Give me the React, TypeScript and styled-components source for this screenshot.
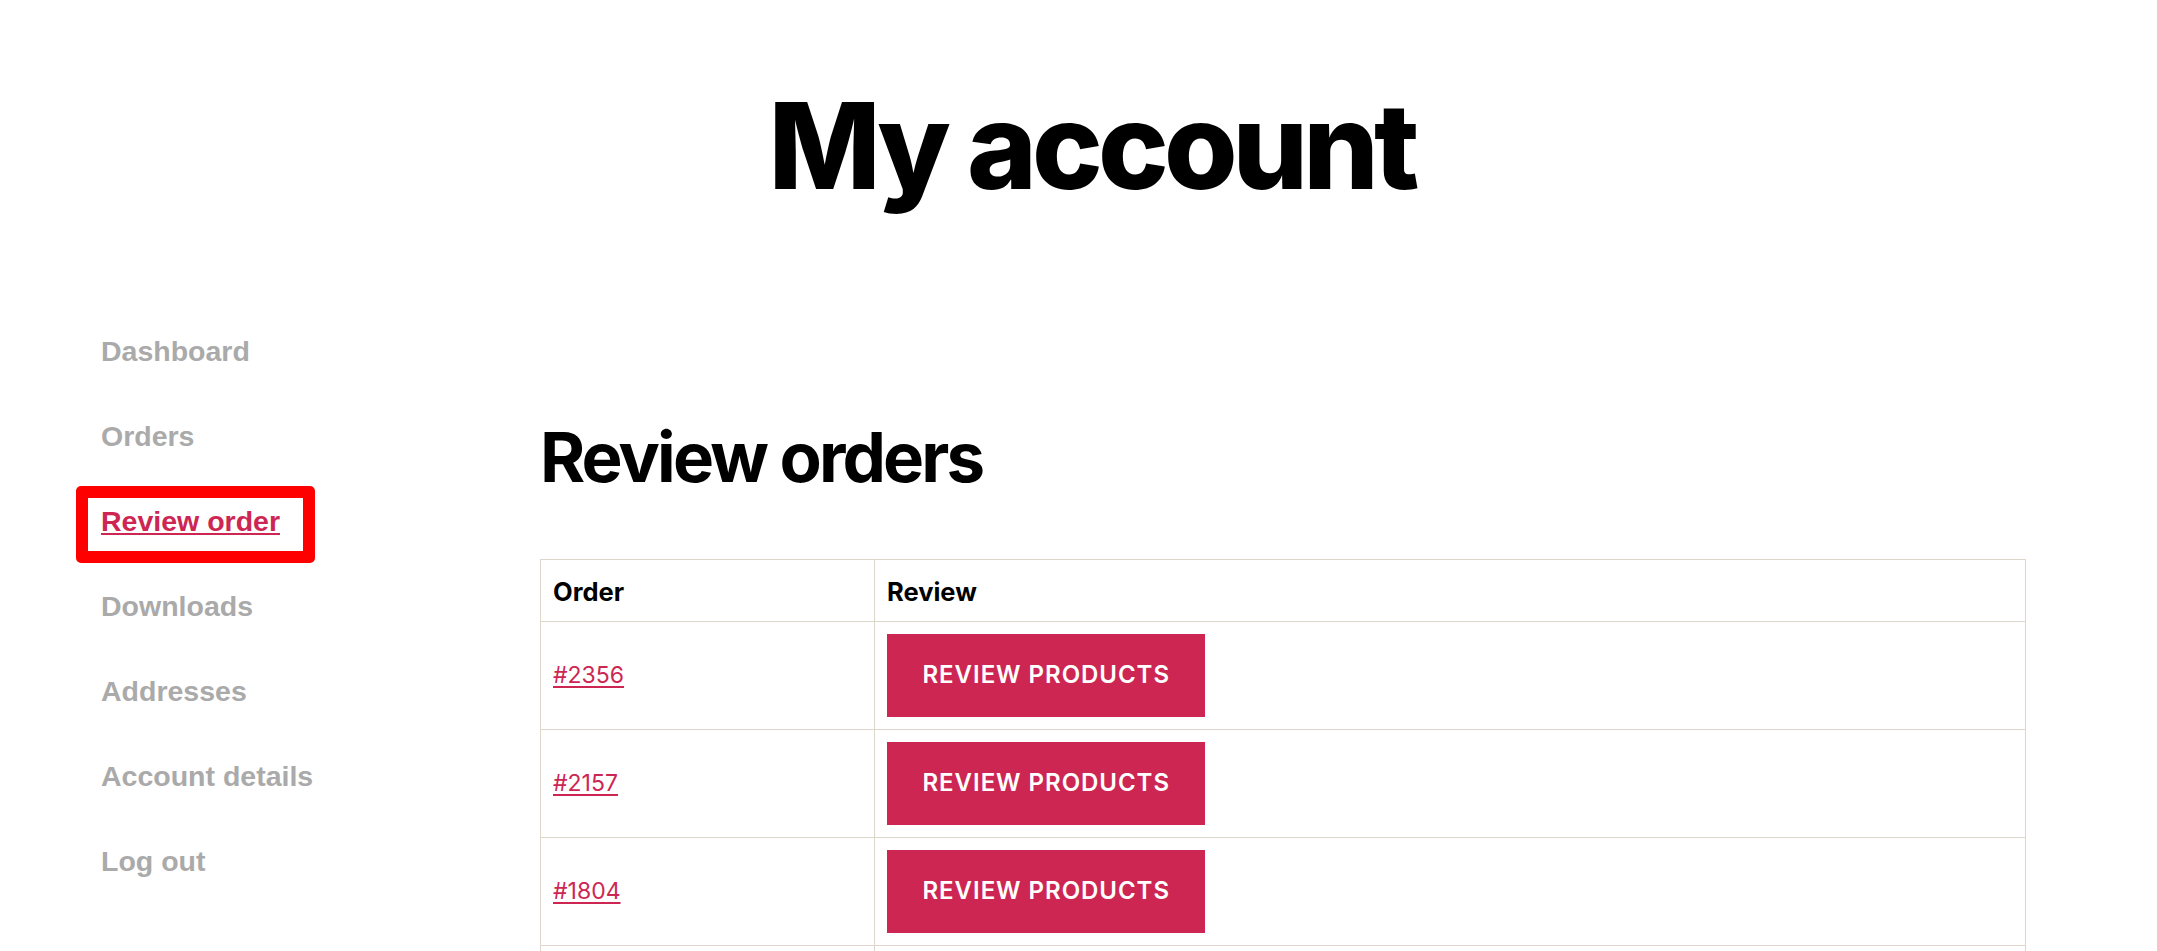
import styled, { createGlobalStyle } from 'styled-components'

const GlobalStyle = createGlobalStyle`
  html, body {
    margin: 0;
    padding: 0;
    background: #ffffff;
  }
  body {
    font-family: Inter, "Noto Sans", sans-serif;
    color: #000000;
  }
`

const PageHeader = styled.header`
  padding-top: 79px;
  padding-left: 26px;
  text-align: center;
`

const PageTitle = styled.h1`
  margin: 0;
  font-family: Inter, sans-serif;
  font-size: 119px;
  font-weight: 800;
  line-height: 1.138;
  letter-spacing: -0.0415625em;
  color: #000000;
`

const AccountLayout = styled.div`
  display: grid;
  grid-template-columns: 439px 1486px;
  padding-left: 101px;
  margin-top: 95px;
`

const AccountNav = styled.nav``

const NavList = styled.ul`
  list-style: none;
  margin: 0;
  padding: 0;
`

const NavItem = styled.li`
  font-family: "Liberation Sans", Arial, sans-serif;
  font-size: 28.5px;
  font-weight: 700;
  line-height: 85px;
  height: 85px;
`

const NavLink = styled.a<{ $active?: boolean }>`
  position: relative;
  color: ${p => (p.$active ? '#cd2653' : '#aaaaaa')};
  text-decoration: ${p => (p.$active ? 'underline' : 'none')};
  text-underline-offset: 2px;
  cursor: pointer;

  &::after {
    content: '';
    display: ${p => (p.$active ? 'block' : 'none')};
    position: absolute;
    top: -19px;
    bottom: -26px;
    left: -25px;
    right: -35px;
    border: 12.5px solid #ff0000;
    border-radius: 5px;
  }
`

const Content = styled.section``

const SectionTitle = styled.h2`
  margin: 105px 0 58px;
  font-size: 69px;
  font-weight: 700;
  line-height: 1.25;
  letter-spacing: -0.0415625em;
  color: #000000;
`

const OrdersTable = styled.table`
  width: 100%;
  border-collapse: collapse;
  border-spacing: 0;
  font-size: 23px;
  line-height: 1.5;
  table-layout: fixed;
`

const HeadCell = styled.th<{ $width?: string }>`
  box-sizing: border-box;
  width: ${p => p.$width || 'auto'};
  border: 1px solid #dcd7ca;
  padding: 14px 12px 11px;
  text-align: left;
  font-size: 25.5px;
  line-height: 36px;
  font-weight: 700;
  color: #000000;
`

const Cell = styled.td`
  box-sizing: border-box;
  border: 1px solid #dcd7ca;
  padding: 12px;
  text-align: left;
  vertical-align: middle;
`

const OrderLink = styled.a`
  color: #cd2653;
  text-decoration: underline;
  text-underline-offset: 3px;
  cursor: pointer;
`

const ReviewButton = styled.button`
  display: inline-block;
  border: none;
  border-radius: 0;
  background: #cd2653;
  color: #ffffff;
  font-family: Inter, sans-serif;
  font-size: 24px;
  font-weight: 600;
  line-height: 1.25;
  letter-spacing: 0.04em;
  text-transform: uppercase;
  padding: 26.5px 35.5px;
  cursor: pointer;
`

const navItems = [
  'Dashboard',
  'Orders',
  'Review order',
  'Downloads',
  'Addresses',
  'Account details',
  'Log out',
]

const orders = ['#2356', '#2157', '#1804', '#1650']

export default function App() {
  return (
    <>
      <GlobalStyle />
      <PageHeader>
        <PageTitle>My account</PageTitle>
      </PageHeader>
      <AccountLayout>
        <AccountNav>
          <NavList>
            {navItems.map(item => (
              <NavItem key={item}>
                <NavLink $active={item === 'Review order'}>{item}</NavLink>
              </NavItem>
            ))}
          </NavList>
        </AccountNav>
        <Content>
          <SectionTitle>Review orders</SectionTitle>
          <OrdersTable>
            <thead>
              <tr>
                <HeadCell $width="334px">Order</HeadCell>
                <HeadCell>Review</HeadCell>
              </tr>
            </thead>
            <tbody>
              {orders.map(order => (
                <tr key={order}>
                  <Cell>
                    <OrderLink>{order}</OrderLink>
                  </Cell>
                  <Cell>
                    <ReviewButton>Review products</ReviewButton>
                  </Cell>
                </tr>
              ))}
            </tbody>
          </OrdersTable>
        </Content>
      </AccountLayout>
    </>
  )
}
